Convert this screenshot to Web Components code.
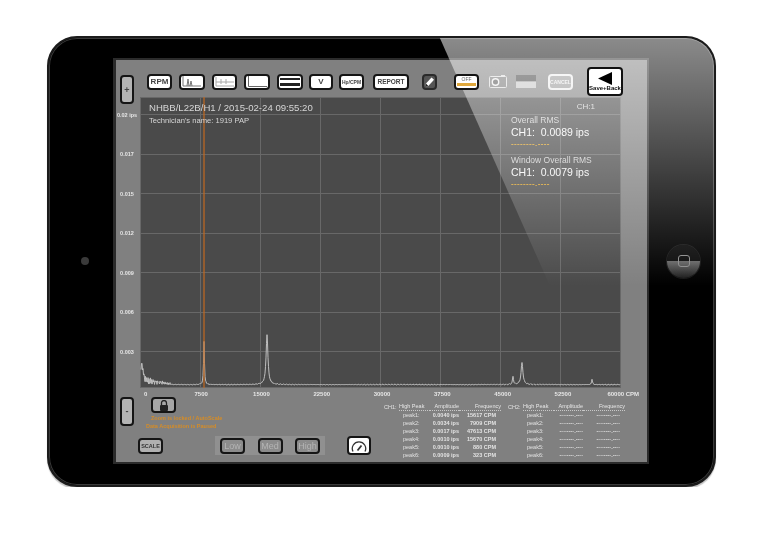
<!DOCTYPE html>
<html lang="en">
<head>
<meta charset="utf-8">
<title>Spectrum</title>
<style>
  html, body { margin: 0; background: #fff; }
  body { padding: 36px 0 0 47px; font-family: "Liberation Sans", Arial, sans-serif; }
</style>
</head>
<body>
<ipad-frame><scope-app></scope-app></ipad-frame>

<script>
// Tablet body: bezel columns in flow, glare laid over everything
class IpadFrame extends HTMLElement {
  constructor() {
    super();
    this.attachShadow({ mode: 'open' });
    this.shadowRoot.innerHTML = `
      <style>
        :host {
          display: flex;
          position: relative;
          box-sizing: border-box;
          width: 669px;
          height: 451px;
          padding: 20px 0 21px;
          background: #000;
          border: 2px solid #1c1c1c;
          border-radius: 30px;
          box-shadow: inset 0 0 0 1px #3a3a3a, 0 2px 1px #c4c4c4;
          overflow: hidden;
          filter: blur(.45px);
        }
        .side { display: flex; align-items: center; justify-content: center; }
        .left { width: 64px; padding-left: 8px; box-sizing: border-box; }
        .right { width: 65px; padding-left: 4px; box-sizing: border-box; }
        .cam { width: 8px; height: 8px; border-radius: 50%; background: #3a3a3a; }
        .home {
          display: flex; align-items: center; justify-content: center;
          width: 33px; height: 33px; border-radius: 50%;
          background: linear-gradient(#0a0a0a 0 50%, #666 50%, #1c1c1c 100%);
          box-shadow: 0 0 0 1px #161616;
        }
        .home i { width: 10px; height: 10px; border: 1.5px solid #8c8c8c; border-radius: 3px; }
        .screen {
          box-sizing: border-box;
          width: 536px;
          background: #808080;
          border: solid #2b2b2b;
          border-width: 2px 2px 2px 3px;
        }
        .glare {
          position: absolute;
          left: -2px; top: -2px; right: -2px;
          height: 250px;
          z-index: 1;
          pointer-events: none;
          background: linear-gradient(rgba(255,255,255,.55), rgba(255,255,255,0));
          clip-path: polygon(392px 0, 503px 250px, 100% 250px, 100% 0);
        }
      </style>
      <div class="side left"><div class="cam"></div></div>
      <div class="screen"><slot></slot></div>
      <div class="side right"><div class="home"><i></i></div></div>
      <div class="glare"></div>
    `;
  }
}

// Small framed button used all over the toolbar
class ToolBtn extends HTMLElement {
  constructor() {
    super();
    this.attachShadow({ mode: 'open' });
    this.shadowRoot.innerHTML = `
      <style>
        :host {
          display: flex;
          align-items: center;
          justify-content: center;
          flex: none;
          box-sizing: border-box;
          width: var(--w, 25px);
          height: var(--h, 16px);
          background: #fff;
          color: #444;
          border: 2px solid #151515;
          border-radius: 4px;
          font: bold 7px "Liberation Sans", Arial, sans-serif;
          white-space: nowrap;
          overflow: hidden;
        }
        :host([kind="grey"]) { background: #8c8c8c; color: #b4b4b4; font-weight: normal; font-size: 9px; }
        :host([kind="ghost"]) { background: #999; color: #eee; border-color: #eee; font-size: 5px; }
        :host([kind="top"]) { position: relative; z-index: 2; }
        ::slotted(svg) { display: block; }
      </style>
      <slot></slot>
    `;
  }
}

// Plot area: svg grid and trace with the texts stacked in the same grid cell
class SpectrumChart extends HTMLElement {
  constructor() {
    super();
    this.attachShadow({ mode: 'open' });
    this.shadowRoot.innerHTML = `
      <style>
        :host {
          display: grid;
          background: #4a4a4a;
          color: #d6d6d6;
          font-family: "Liberation Sans", Arial, sans-serif;
        }
        svg, .over { grid-area: 1 / 1; }
        svg { display: block; }
        .over { display: flex; justify-content: space-between; }
        .head { padding: 5px 0 0 9px; }
        .title { font-size: 9.6px; line-height: 12px; white-space: nowrap; }
        .tech { font-size: 7.6px; line-height: 10px; margin-top: 2px; }
        .side { width: 110px; padding-top: 5px; }
        .ch { font-size: 8px; line-height: 10px; text-align: right; padding-right: 26px; margin-bottom: 3px; }
        rms-readout + rms-readout { margin-top: 6px; }
      </style>
      <svg width="481" height="291" viewBox="0 0 481 291"></svg>
      <div class="over">
        <div class="head">
          <div class="title">NHBB/L22B/H1 / 2015-02-24 09:55:20</div>
          <div class="tech">Technician's name: 1919 PAP</div>
        </div>
        <div class="side">
          <div class="ch">CH:1</div>
          <rms-readout label="Overall RMS" value="CH1:&nbsp; 0.0089 ips"></rms-readout>
          <rms-readout label="Window Overall RMS" value="CH1:&nbsp; 0.0079 ips"></rms-readout>
        </div>
      </div>
    `;
  }

  connectedCallback() {
    const svg = this.shadowRoot.querySelector('svg');
    let lines = '';
    for (let x = 0; x <= 480; x += 60) lines += `M${x + .5} 0V291`;
    for (let i = 0; i < 7; i++) lines += `M0 ${Math.floor(17.5 + i * 39.5) + .5}H481`;
    lines += 'M0 .5H481M0 290.5H481';
    svg.innerHTML = `
      <path d="${lines}" stroke="#686868" stroke-width="1" fill="none"/>
      <path d="${this.tracePath()}" stroke="#c0c0c0" stroke-width="1" fill="none"/>
      <path d="M64 0V291" stroke="#c4691f" stroke-width="1.2"/>
    `;
  }

  // Spectrum is a few narrow peaks on a noise floor, rough low end near zero
  tracePath() {
    const peaks = [[127, 50, 1.1], [64, 43, .5], [382, 22, 1.1], [373, 8, .6], [452, 5, .6], [2, 17, 1.2]];
    let d = '';
    for (let x = 1; x <= 480; x += .5) {
      let h = 1 + Math.abs(Math.sin(x * 7.3) * Math.cos(x * 2.1));
      if (x < 32) h += Math.abs(Math.sin(x * 3.7) * Math.sin(x * 1.3)) * (10 - x * .27);
      for (const [x0, height, w] of peaks) h += height / (1 + ((x - x0) / w) ** 2);
      d += `${d ? 'L' : 'M'}${x} ${(289 - h).toFixed(1)}`;
    }
    return d;
  }
}

class RmsReadout extends HTMLElement {
  constructor() {
    super();
    this.attachShadow({ mode: 'open' });
  }

  connectedCallback() {
    this.shadowRoot.innerHTML = `
      <style>
        :host { display: block; font-family: "Liberation Sans", Arial, sans-serif; }
        div { white-space: nowrap; }
        .label { font-size: 8.5px; line-height: 10px; color: #d0d0d0; }
        .value { font-size: 10.5px; line-height: 14px; color: #f6f6f6; }
        .dash { font-size: 8px; line-height: 10px; color: #e2a526; font-weight: bold; letter-spacing: .35px; }
      </style>
      <div class="label">${this.getAttribute('label')}</div>
      <div class="value">${this.getAttribute('value')}</div>
      <div class="dash">--------.----</div>
    `;
  }
}

// Peak list for one channel, columns set by a shared grid
class PeakTable extends HTMLElement {
  constructor() {
    super();
    this.attachShadow({ mode: 'open' });
  }

  connectedCallback() {
    const rows = JSON.parse(this.getAttribute('rows') || '[]');
    let cells = '';
    for (let i = 0; i < 6; i++) {
      const row = rows[i] || ['--------.----', '--------.----'];
      cells += `<span></span><span class="name">peak${i + 1}:</span><span class="amp">${row[0]}</span><span class="freq">${row[1]}</span>`;
    }
    this.shadowRoot.innerHTML = `
      <style>
        :host {
          display: grid;
          grid-template-columns: 15px 31px 29px 42px;
          grid-auto-rows: 8px;
          width: 117px;
          color: #e2e2e2;
          font: bold 5.5px/8px "Liberation Sans", Arial, sans-serif;
          white-space: nowrap;
        }
        .h { font-weight: normal; color: #e6e6e6; border-bottom: 1px dotted #c8c8c8; line-height: 7px; }
        .ch { font-weight: normal; }
        .name { padding-left: 4px; font-weight: normal; }
        .amp, .freq { text-align: right; }
        .freq { padding-right: 5px; }
        .h.r { text-align: right; }
        .h.freq { padding-right: 0; }
      </style>
      <span class="ch">${this.getAttribute('ch')}:</span>
      <span class="h">High Peak</span><span class="h r">Amplitude</span><span class="h r freq">Frequency</span>
      ${cells}
    `;
  }
}

// The app screen: rail, toolbar, plot, axis and lower controls
class ScopeApp extends HTMLElement {
  constructor() {
    super();
    this.attachShadow({ mode: 'open' });
    const yLabels = ['0.02 ips', '0.017', '0.015', '0.012', '0.009', '0.006', '0.003'];
    const xLabels = ['7500', '15000', '22500', '30000', '37500', '45000', '52500', '60000 CPM'];
    const ch1 = [['0.0040 ips', '15617 CPM'], ['0.0034 ips', '7909 CPM'], ['0.0017 ips', '47613 CPM'],
                 ['0.0010 ips', '15670 CPM'], ['0.0010 ips', '880 CPM'], ['0.0009 ips', '323 CPM']];
    this.shadowRoot.innerHTML = `
      <style>
        :host {
          display: grid;
          grid-template-columns: 24px 481px 26px;
          grid-template-rows: 37px 291px 74px;
          font-family: "Liberation Sans", Arial, sans-serif;
          color: #e6e6e6;
        }
        .rail {
          grid-row: 1 / 4;
          display: flex; flex-direction: column; align-items: center;
          width: 22px; padding-top: 15px;
        }
        .rail .zoom { --w: 14px; --h: 29px; background: #b4b4b4; color: #444; font-size: 9px; }
        .rail .minus { margin-top: 41px; }
        .ylabels {
          display: flex; flex-direction: column; gap: 31.5px;
          margin-top: 6.5px;
          font: bold 5.5px/8px "Liberation Sans", Arial, sans-serif;
          text-align: center; white-space: nowrap;
        }
        .bar { display: flex; align-items: center; padding: 6px 0 0 7px; grid-column: 2 / 4; }
        spectrum-chart { grid-column: 2; }
        .lower { grid-column: 2 / 4; display: flex; flex-direction: column; }
        .xaxis {
          display: flex; height: 9px; padding-top: 3px; box-sizing: border-box;
          font: bold 6px/6px "Liberation Sans", Arial, sans-serif;
        }
        .xaxis span { flex: none; width: 60.3px; text-align: center; white-space: nowrap; }
        .xaxis .zero { width: 31px; text-align: left; padding-left: 4px; box-sizing: border-box; }
        .below { display: flex; }
        .ctl { width: 246px; margin-left: -2px; box-sizing: border-box; }
        .lock { --w: 25px; --h: 16px; margin-left: 13px; background: #a6a6a6; }
        .note { font: bold 5.5px/8px "Liberation Sans", Arial, sans-serif; color: #d48c28; white-space: nowrap; }
        .note.a { margin: 1px 0 0 13px; }
        .note.b { margin-left: 8px; }
        .row { display: flex; align-items: center; margin-top: 6px; }
        .scale { font-size: 5.5px; color: #333; background: #b0b0b0; }
        .levels {
          display: flex; gap: 12.5px; align-items: center;
          margin-left: 52px; padding: 0 5px; height: 19px;
          background: #909090;
        }
        .gauge { --w: 24px; --h: 19px; margin-left: 22px; }
        .peaks { display: flex; gap: 7px; padding-top: 6px; }
      </style>
      <div class="rail">
        <tool-btn class="zoom">+</tool-btn>
        <div class="ylabels">${yLabels.map(t => `<span>${t}</span>`).join('')}</div>
        <tool-btn class="zoom minus">-</tool-btn>
      </div>

      <div class="bar">
        <tool-btn style="font-size:8px">RPM</tool-btn>
        <tool-btn style="--w:26px;margin-left:7px">
          <svg width="20" height="11" viewBox="0 0 20 11" fill="none" stroke="#777"><path d="M1 0V10H19M5 10L6 3L7 10M8 10L9 5L10 10"/></svg>
        </tool-btn>
        <tool-btn style="margin-left:7px">
          <svg width="20" height="11" viewBox="0 0 20 11" fill="none" stroke="#aaa"><path d="M1 1V10M1 6H19M6 3V8M11 3V8M19 10H1"/></svg>
        </tool-btn>
        <tool-btn style="--w:26px;margin-left:7px">
          <svg width="20" height="11" viewBox="0 0 20 11" fill="none" stroke="#666"><path d="M1.5 0V10.5H20"/></svg>
        </tool-btn>
        <tool-btn style="--w:26px;margin-left:7px">
          <svg width="20" height="8" viewBox="0 0 20 8" fill="#222"><rect y="0" width="20" height="2"/><rect y="5" width="20" height="3"/></svg>
        </tool-btn>
        <tool-btn style="--w:24px;margin-left:6px;font-size:8px">V</tool-btn>
        <tool-btn style="margin-left:6px;font-size:5px">Hp/CPM</tool-btn>
        <tool-btn style="--w:36px;margin-left:9px;font-size:6.5px">REPORT</tool-btn>
        <tool-btn kind="top" style="--w:15px;margin-left:13px;background:#555;border-color:#2a2a2a">
          <svg width="11" height="12" viewBox="0 0 11 12"><path d="M1 11L2 7.5L7.5 1.5L10 3.8L4.3 10Z" fill="#fff"/><path d="M1 11L2 7.5L4.3 10Z" fill="#222"/></svg>
        </tool-btn>
        <tool-btn kind="top" style="margin-left:17px;font-size:5px;font-weight:normal;color:#666;flex-direction:column;justify-content:flex-start;line-height:6px">
          OFF<span style="display:block;width:19px;height:3px;margin-top:1px;background:#e0a83c"></span>
        </tool-btn>
        <svg width="18" height="13" viewBox="0 0 18 13" style="margin-left:10px;flex:none">
          <rect x=".5" y="1.5" width="17" height="11" rx="1" fill="#777" stroke="#ddd"/>
          <circle cx="6.5" cy="7" r="3.2" fill="#555" stroke="#eee" stroke-width="1.4"/>
          <rect x="12" y="0" width="4" height="2" fill="#ddd"/>
        </svg>
        <div style="margin-left:9px;flex:none;width:20px">
          <div style="height:6px;background:#444"></div>
          <div style="height:1px;background:#999"></div>
          <div style="height:6px;background:#c8c8c8"></div>
        </div>
        <tool-btn kind="ghost" style="margin-left:12px">CANCEL</tool-btn>
        <tool-btn kind="top" style="--w:36px;--h:29px;margin-left:14px;color:#111;font-size:6px;flex-direction:column;border-color:#111">
          <svg width="14" height="13" viewBox="0 0 14 13"><path d="M14 0V13L0 6.5Z" fill="#000"/></svg>
          Save+Back
        </tool-btn>
      </div>

      <spectrum-chart></spectrum-chart>

      <div class="lower">
        <div class="xaxis">
          <span class="zero">0</span>
          ${xLabels.map(t => `<span>${t}</span>`).join('')}
        </div>
        <div class="below">
          <div class="ctl">
            <tool-btn class="lock">
              <svg width="10" height="11" viewBox="0 0 10 11"><path d="M2.5 5V3a2.5 2.5 0 0 1 5 0V5" fill="none" stroke="#222" stroke-width="1.3"/><rect x="1" y="5" width="8" height="6" rx="1" fill="#222"/></svg>
            </tool-btn>
            <div class="note a">Zoom is locked / AutoScale</div>
            <div class="note b">Data Acquisition is Paused</div>
            <div class="row">
              <tool-btn class="scale">SCALE</tool-btn>
              <div class="levels">
                <tool-btn kind="grey">Low</tool-btn>
                <tool-btn kind="grey">Med</tool-btn>
                <tool-btn kind="grey">High</tool-btn>
              </div>
              <tool-btn class="gauge">
                <svg width="16" height="14" viewBox="0 0 16 14" fill="none" stroke="#333"><path d="M2 12.5A6.7 6.7 0 1 1 14 12.5" stroke-width="1.3"/><path d="M6.5 11.5L10.5 6.5" stroke-width="1.8"/></svg>
              </tool-btn>
            </div>
          </div>
          <div class="peaks">
            <peak-table ch="CH1" rows='${JSON.stringify(ch1)}'></peak-table>
            <peak-table ch="CH2"></peak-table>
          </div>
        </div>
      </div>
    `;
  }
}

customElements.define('ipad-frame', IpadFrame);
customElements.define('tool-btn', ToolBtn);
customElements.define('rms-readout', RmsReadout);
customElements.define('spectrum-chart', SpectrumChart);
customElements.define('peak-table', PeakTable);
customElements.define('scope-app', ScopeApp);
</script>
</body>
</html>
